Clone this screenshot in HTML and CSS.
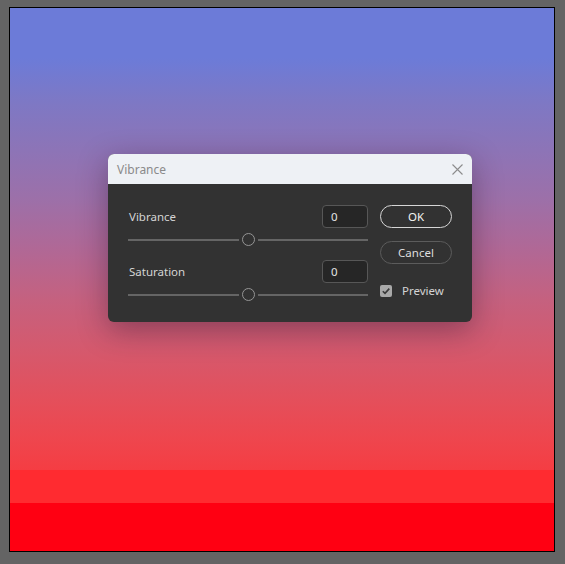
FILE: index.html
```html
<!DOCTYPE html>
<html lang="en">
<head>
<meta charset="utf-8">
<title>Vibrance</title>
<link rel="stylesheet" href="styles.css">
</head>
<body>
<div class="workspace">
  <div class="canvas">
    <div class="dialog">
      <div class="titlebar">
        <span class="title">Vibrance</span>
        <svg class="close" width="11" height="11" viewBox="0 0 11 11">
          <path d="M0.5 0.5 L10.5 10.5 M10.5 0.5 L0.5 10.5" stroke="#8c8c8c" stroke-width="1.1" fill="none"/>
        </svg>
      </div>
      <div class="body">
        <div class="controls">
          <div class="group">
            <div class="row">
              <span class="label">Vibrance</span>
              <div class="field">0</div>
            </div>
            <div class="slider">
              <span class="track"></span>
              <span class="thumb"></span>
              <span class="track"></span>
            </div>
          </div>
          <div class="group">
            <div class="row">
              <span class="label">Saturation</span>
              <div class="field">0</div>
            </div>
            <div class="slider">
              <span class="track"></span>
              <span class="thumb"></span>
              <span class="track"></span>
            </div>
          </div>
        </div>
        <div class="actions">
          <button class="btn primary">OK</button>
          <button class="btn">Cancel</button>
          <label class="check">
            <span class="box">
              <svg width="12" height="12" viewBox="0 0 12 12">
                <path d="M2.8 6.2 L5 8.4 L9.3 3.6" stroke="#3a3a3a" stroke-width="1.6" fill="none"/>
              </svg>
            </span>
            <span class="check-label">Preview</span>
          </label>
        </div>
      </div>
    </div>
  </div>
</div>
</body>
</html>
```
FILE: styles.css
```css
html, body {
  margin: 0;
  padding: 0;
}

body {
  background: #646464;
  font-family: "Noto Sans", "Open Sans", sans-serif;
  width: 565px;
  height: 564px;
  overflow: hidden;
}

.workspace {
  padding: 7px 0 0 9px;
}

.canvas {
  position: relative;
  width: 544px;
  height: 543px;
  border: 1px solid #000;
  background: linear-gradient(to bottom,
    #6c7bd8 0px,
    #6c7bd8 50px,
    #7e78c4 95px,
    #9c70a9 190px,
    #b06896 240px,
    #c5617f 292px,
    #d5596d 342px,
    #e44f5b 392px,
    #ee464e 430px,
    #f53d43 462px,
    #ff2b30 462px,
    #ff2b30 495px,
    #ff0012 495px,
    #ff0012 543px);
}

.dialog {
  position: absolute;
  left: 98px;
  top: 146px;
  width: 364px;
  height: 168px;
  border-radius: 6px;
  overflow: hidden;
  background: #323232;
  box-shadow: 0 8px 30px rgba(40, 15, 40, 0.4);
  display: flex;
  flex-direction: column;
}

.titlebar {
  height: 30px;
  background: #eef1f5;
  display: flex;
  align-items: center;
  justify-content: space-between;
  padding: 0 9px 0 9px;
}

.title {
  color: #8a8a8a;
  font-size: 12px;
}

.close {
  display: block;
}

.body {
  display: flex;
  padding: 21px 0 0 20px;
}

.controls {
  width: 240px;
  display: flex;
  flex-direction: column;
  gap: 14px;
}

.row {
  display: flex;
  align-items: center;
  justify-content: space-between;
  height: 23px;
}

.label {
  color: #d4d4d4;
  font-size: 11.5px;
  padding-left: 1px;
}

.field {
  box-sizing: border-box;
  width: 46px;
  height: 23px;
  border: 1px solid #575757;
  border-radius: 4px;
  background: #262626;
  color: #e4e4e4;
  font-size: 11.5px;
  line-height: 21px;
  padding-left: 8px;
}

.slider {
  display: flex;
  align-items: center;
  height: 13px;
  margin-top: 5px;
}

.track {
  flex: 1;
  height: 2px;
  background: #656565;
}

.thumb {
  box-sizing: border-box;
  width: 13px;
  height: 13px;
  margin: 0 3px;
  border: 1.5px solid #959595;
  border-radius: 50%;
}

.actions {
  margin-left: 12px;
  width: 72px;
  display: flex;
  flex-direction: column;
}

.btn {
  box-sizing: border-box;
  width: 72px;
  height: 23px;
  border-radius: 12px;
  border: 1px solid #5c5c5c;
  background: transparent;
  color: #dedede;
  font-family: inherit;
  font-size: 11.5px;
  padding: 0;
}

.btn.primary {
  border-color: #d6d6d6;
  color: #f4f4f4;
  margin-bottom: 13px;
}

.check {
  display: flex;
  align-items: center;
  margin-top: 19px;
}

.box {
  width: 12px;
  height: 12px;
  border-radius: 2px;
  background: #a9a9a9;
  display: flex;
}

.check-label {
  margin-left: 10px;
  color: #d4d4d4;
  font-size: 11.5px;
}
```
